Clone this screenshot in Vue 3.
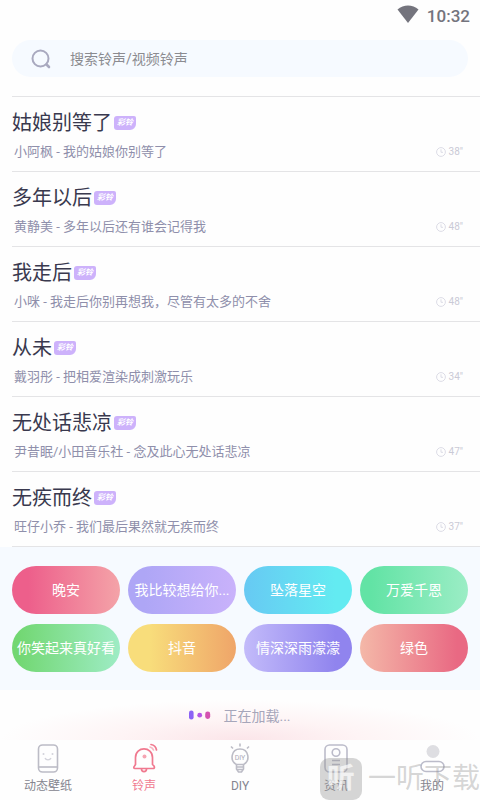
<script setup>
import { ref } from 'vue'

const query = ref('')
const songs = [
  { title: '姑娘别等了', artist: '小阿枫', line: '我的姑娘你别等了', seconds: 38 },
  { title: '多年以后', artist: '黄静美', line: '多年以后还有谁会记得我', seconds: 48 },
  { title: '我走后', artist: '小咪', line: '我走后你别再想我，尽管有太多的不舍', seconds: 48 },
  { title: '从未', artist: '戴羽彤', line: '把相爱渲染成刺激玩乐', seconds: 34 },
  { title: '无处话悲凉', artist: '尹昔眠/小田音乐社', line: '念及此心无处话悲凉', seconds: 47 },
  { title: '无疾而终', artist: '旺仔小乔', line: '我们最后果然就无疾而终', seconds: 37 }
]
const tags = [
  { name: '晚安', tone: 'rose' },
  { name: '我比较想给你...', tone: 'lilac' },
  { name: '坠落星空', tone: 'sky' },
  { name: '万爱千恩', tone: 'mint' },
  { name: '你笑起来真好看', tone: 'green' },
  { name: '抖音', tone: 'amber' },
  { name: '情深深雨濛濛', tone: 'violet' },
  { name: '绿色', tone: 'coral' }
]
</script>

<template>
  <div class="app">
    <header class="status">
      <svg class="wifi" width="22" height="18" viewBox="0 0 22 18" aria-hidden="true">
        <path d="M0.500 4.500C6.500 -0.800 15.500 -0.800 21.500 4.500L11 18Z" fill="#74747d" />
      </svg>
      <span>10:32</span>
    </header>

    <label class="search">
      <svg width="20" height="20" viewBox="0 0 20 20" fill="none" stroke="#a9a9bf" stroke-width="2" aria-hidden="true">
        <circle cx="9.500" cy="9.500" r="8" />
        <path d="M15.500 15.500L18 18" stroke-width="2.600" stroke-linecap="round" />
      </svg>
      <input v-model="query" type="text" placeholder="搜索铃声/视频铃声" aria-label="搜索铃声/视频铃声" />
    </label>

    <ul class="songs">
      <li v-for="song in songs" :key="song.title">
        <div class="heading">
          <h2>{{ song.title }}</h2>
          <span class="badge">彩铃</span>
        </div>
        <div class="detail">
          <p>{{ song.artist }} - {{ song.line }}</p>
          <span class="time">
            <svg width="10" height="10" viewBox="0 0 10 10" fill="none" stroke="#dcdce6" aria-hidden="true">
              <circle cx="5" cy="5" r="4.400" />
              <path d="M5 2.300V5.300H7" />
            </svg>
            {{ song.seconds }}″
          </span>
        </div>
      </li>
    </ul>

    <section class="tags">
      <button v-for="tag in tags" :key="tag.name" type="button" :class="tag.tone">{{ tag.name }}</button>
    </section>

    <div class="loading">
      <svg width="22" height="10" viewBox="0 0 22 10" aria-hidden="true">
        <rect x="0" y="0.500" width="4.600" height="9" rx="2.200" fill="#8b62f5" />
        <circle cx="10.700" cy="5.200" r="2.400" fill="#b356e6" />
        <rect x="16.200" y="1.500" width="5" height="7.500" rx="2.400" fill="#d452b0" />
      </svg>
      <span>正在加载...</span>
    </div>

    <nav class="tabs">
      <a href="#wallpaper">
        <svg width="32" height="32" viewBox="0 0 32 32" fill="none" stroke="#bcbcc6" stroke-width="1.600" aria-hidden="true">
          <rect x="6.500" y="2" width="19" height="27" rx="4" />
          <path d="M6.500 24H25.500" />
          <g stroke="#d3d3db" stroke-width="1.300">
            <path d="M13 15C14 17.500 18 17.500 19 15" />
            <circle cx="11.500" cy="11" r="1" fill="#d3d3db" stroke="none" />
            <circle cx="20.500" cy="11" r="1" fill="#d3d3db" stroke="none" />
          </g>
        </svg>
        <span>动态壁纸</span>
      </a>
      <a href="#ringtone" class="active" aria-current="page">
        <svg width="32" height="32" viewBox="0 0 32 32" fill="none" stroke="#f0798f" stroke-width="1.700" stroke-linejoin="round" stroke-linecap="round" aria-hidden="true">
          <path d="M7.500 21.500V14.500C7.500 3 24.500 3 24.500 14.500V21.500L26 23C27 25 26 25.500 25 25.500H7C5.500 25.500 5.500 24 6.500 23Z" />
          <path d="M13.500 26C13.500 29.500 18.500 29.500 18.500 26" />
          <circle cx="16.500" cy="13.500" r="2" fill="#f5a5b3" stroke="none" />
          <path d="M23 1.500C26 2 28 4 28.500 7" />
          <path d="M22 4C24 4.500 25 5.500 25.500 7" stroke="#f8b8c3" />
        </svg>
        <span>铃声</span>
      </a>
      <a href="#diy">
        <svg width="32" height="32" viewBox="0 0 32 32" fill="none" stroke="#bcbcc6" stroke-width="1.600" aria-hidden="true">
          <path d="M12.500 21.500C5.500 18 7 6 16 6C25 6 26.500 18 19.500 21.500Z" />
          <path d="M12.500 21.500V26L14.500 29H17.500L19.500 26V21.500M12.500 24H19.500M13.500 26.500H18.500" />
          <path d="M16 0.500V3.500M7 3.500L9 5.500M25 3.500L23 5.500" />
          <text x="16" y="17" text-anchor="middle" font-family="Roboto, sans-serif" font-size="7" fill="#aaaab6" stroke="none">DIY</text>
        </svg>
        <span>DIY</span>
      </a>
      <a href="#news">
        <svg width="32" height="32" viewBox="0 0 32 32" fill="none" stroke="#bcbcca" stroke-width="1.600" aria-hidden="true">
          <rect x="5" y="2" width="22" height="27" rx="4.500" />
          <circle cx="16" cy="9.500" r="3.800" />
          <path d="M12 17.500H20M12 21.500H20" />
        </svg>
        <span>资讯</span>
      </a>
      <a href="#mine">
        <svg width="32" height="32" viewBox="0 0 32 32" aria-hidden="true">
          <circle cx="17" cy="8.500" r="6.500" fill="#dedee2" />
          <rect x="5" y="18.500" width="23" height="10" rx="5" fill="#fff" stroke="#bcbcca" stroke-width="1.600" />
        </svg>
        <span>我的</span>
      </a>
      <div class="mark" aria-hidden="true">
        <span class="tile">听</span>
        <span>一听下载</span>
      </div>
    </nav>
  </div>
</template>

<style>
body {
  margin: 0;
  background: #fefefe;
}
</style>

<style scoped>
.app {
  display: flex;
  flex-direction: column;
  min-height: 100vh;
  font-family: Roboto, "Noto Sans CJK SC", sans-serif;
  background: #fefefe;
}
.status {
  display: flex;
  justify-content: flex-end;
  align-items: center;
  gap: 8px;
  height: 32px;
  padding: 0 10px;
  color: #74747d;
  font-size: 17px;
  font-weight: 500;
}
.wifi {
  margin-bottom: 4px;
}
.search {
  display: flex;
  align-items: center;
  gap: 19px;
  height: 37px;
  margin: 8px 12px 0;
  padding: 0 19px;
  border-radius: 19px;
  background: #f6faff;
}
.search input {
  flex: 1;
  min-width: 0;
  padding: 0;
  border: 0;
  outline: 0;
  background: transparent;
  color: #55555f;
  font: inherit;
  font-size: 14px;
}
.search input::placeholder {
  color: #8b8b90;
  opacity: 1;
}
.songs {
  margin: 19px 0 0 12px;
  padding: 0;
  list-style: none;
  border-top: 1px solid #e4e4e6;
}
.songs li {
  box-sizing: border-box;
  height: 75px;
  padding-top: 11px;
  border-bottom: 1px solid #e4e4e6;
}
.heading {
  display: flex;
  align-items: center;
  gap: 2px;
  height: 30px;
}
.heading h2 {
  margin: 0;
  color: #39394e;
  font-size: 20px;
  font-weight: 400;
  line-height: 30px;
}
.badge {
  width: 22px;
  height: 14px;
  border-radius: 3px 2px 6px 3px;
  background: #cdb2fb;
  color: #fff;
  font-size: 8px;
  font-style: italic;
  font-weight: 700;
  line-height: 14px;
  text-align: center;
}
.detail {
  display: flex;
  align-items: center;
  justify-content: space-between;
  height: 28px;
  padding: 0 17px 0 2px;
}
.detail p {
  margin: 0;
  color: #8f8fab;
  font-size: 13px;
  line-height: 20px;
}
.time {
  display: flex;
  align-items: center;
  gap: 3px;
  color: #cacad6;
  font-size: 10px;
  line-height: 12px;
}
.tags {
  display: grid;
  grid-template-columns: repeat(4, minmax(0, 1fr));
  gap: 10px 8px;
  padding: 19px 12px 18px;
  background: #f6faff;
}
.tags button {
  height: 48px;
  padding: 0 0 2px;
  border: 0;
  border-radius: 24px;
  color: #fff;
  font: inherit;
  font-size: 14px;
  white-space: nowrap;
}
.rose { background: linear-gradient(90deg, #ed5f8b 15%, #f4a3a8); }
.lilac { background: linear-gradient(90deg, #aea6f6 15%, #c9b2fb); }
.sky { background: linear-gradient(90deg, #67c9f3, #63ebf1 85%); }
.mint { background: linear-gradient(90deg, #62e3a5 10%, #9bedc5); }
.green { background: linear-gradient(90deg, #72d772 5%, #9eecc5); }
.amber { background: linear-gradient(90deg, #f8dd7b 20%, #efa569); }
.violet { background: linear-gradient(90deg, #c3bbfa, #9084ee 85%); }
.coral { background: linear-gradient(90deg, #f4b8a8, #e96983 90%); }
.loading {
  display: flex;
  flex: 1;
  align-items: center;
  justify-content: center;
  gap: 12px;
  min-height: 50px;
  background: radial-gradient(ellipse 50% 40px at 50% 100%, #fbe5e9, #fef4f5 50%, #fefefe);
  color: #a6a6ba;
  font-size: 14px;
}
.tabs {
  position: relative;
  display: grid;
  grid-template-columns: repeat(5, 1fr);
  height: 60px;
  background: #fefefe;
  overflow: hidden;
}
.tabs a {
  display: flex;
  flex-direction: column;
  align-items: center;
  gap: 2px;
  padding-top: 3px;
  color: #85858f;
  font-size: 12px;
  line-height: 18px;
  text-decoration: none;
}
.tabs .active {
  color: #f0798f;
}
.mark {
  position: absolute;
  right: 0;
  bottom: 0;
  display: flex;
  align-items: center;
  gap: 6px;
  color: rgba(140, 140, 140, 0.36);
  font-size: 28px;
  line-height: 42px;
  pointer-events: none;
}
.tile {
  width: 42px;
  height: 42px;
  border-radius: 9px;
  background: rgba(140, 140, 140, 0.36);
  color: rgba(255, 255, 255, 0.7);
  font-weight: 700;
  text-align: center;
}
</style>
